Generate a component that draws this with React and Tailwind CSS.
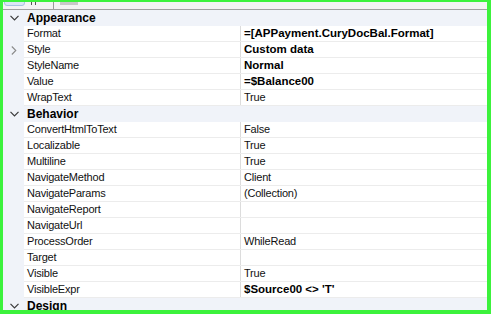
import React from "react";

const rows = [
  { cat: "Appearance" },
  { n: "Format", v: "=[APPayment.CuryDocBal.Format]", b: true },
  { n: "Style", v: "Custom data", b: true, exp: true },
  { n: "StyleName", v: "Normal", b: true },
  { n: "Value", v: "=$Balance00", b: true },
  { n: "WrapText", v: "True" },
  { cat: "Behavior" },
  { n: "ConvertHtmlToText", v: "False" },
  { n: "Localizable", v: "True" },
  { n: "Multiline", v: "True" },
  { n: "NavigateMethod", v: "Client" },
  { n: "NavigateParams", v: "(Collection)" },
  { n: "NavigateReport", v: "" },
  { n: "NavigateUrl", v: "" },
  { n: "ProcessOrder", v: "WhileRead" },
  { n: "Target", v: "" },
  { n: "Visible", v: "True" },
  { n: "VisibleExpr", v: "$Source00 <> 'T'", b: true },
  { cat: "Design" },
];

function Down() {
  return (
    <svg width="9" height="6" viewBox="0 0 9 6" className="block">
      <path d="M0.5 0.8 L4.5 4.8 L8.5 0.8" fill="none" stroke="#3a3a3a" strokeWidth="1.2" />
    </svg>
  );
}
function Right() {
  return (
    <svg width="6" height="9" viewBox="0 0 6 9" className="block">
      <path d="M0.8 0.5 L4.8 4.5 L0.8 8.5" fill="none" stroke="#8a8a8a" strokeWidth="1.1" />
    </svg>
  );
}

export default function App() {
  return (
    <div
      className="w-[491px] h-[314px] bg-[#3cf23c] pt-[2px] pl-[3px] pr-[4px] pb-[4px]"
      style={{ fontFamily: '"Liberation Sans", Arial, sans-serif' }}
    >
      <div className="h-[308px] w-[484px] overflow-hidden bg-white flex flex-col">
        <div className="h-[7px] bg-[#f3f3f3] flex items-start shrink-0 relative">
          <div className="ml-[1px] mt-[-3px] w-[21px] h-[7px] rounded-[3px] bg-[#dbe6f4] border border-[#a9c2e0]" />
          <div className="ml-[6px] w-[1px] h-[3px] bg-[#555]" />
          <div className="ml-[3px] w-[1px] h-[3px] bg-[#555]" />
          <div className="ml-[17px] w-[1px] h-[7px] bg-[#9a9a9a]" />
          <div className="ml-[6px] w-[18px] h-[3px] bg-[#c8c8c8]" />
        </div>
        <div className="h-[1px] bg-[#a0a0a0] shrink-0" />
        {rows.map((r, i) =>
          r.cat ? (
            <div key={i} className="h-[16px] shrink-0 flex items-center bg-[#f0f3f9]">
              <div className="w-[21px] flex justify-center pl-[1px]">
                <Down />
              </div>
              <span className="ml-[3px] text-[12px] font-bold text-black leading-none">{r.cat}</span>
            </div>
          ) : (
            <div key={i} className="h-[16px] shrink-0 flex">
              <div className="w-[21px] bg-[#f0f3f9] flex items-center justify-center pl-[1px]">
                {r.exp ? <Right /> : null}
              </div>
              <div className="flex-1 flex border-b border-[#ececec]">
                <div className="w-[217px] border-r border-[#dcdcdc] flex items-center pl-[3px]">
                  <span className="text-[11px] text-[#111] leading-none tracking-[-0.2px]">{r.n}</span>
                </div>
                <div className="flex-1 flex items-center pl-[3px]">
                  <span
                    className={
                      r.b
                        ? "text-[11.5px] font-bold text-black leading-none"
                        : "text-[11px] text-[#111] leading-none tracking-[-0.2px]"
                    }
                  >
                    {r.v}
                  </span>
                </div>
              </div>
            </div>
          )
        )}
      </div>
    </div>
  );
}
